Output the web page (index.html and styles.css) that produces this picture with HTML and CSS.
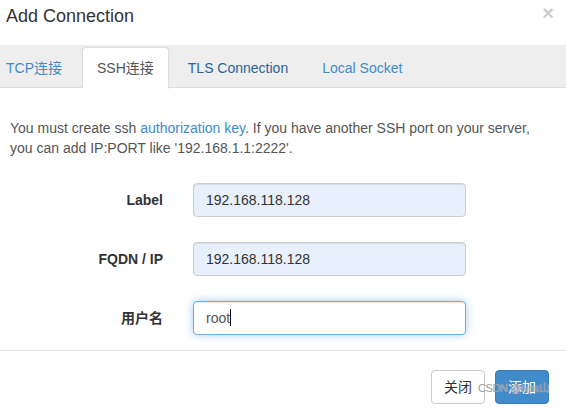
FILE: index.html
```html
<!DOCTYPE html>
<html>
<head>
<meta charset="utf-8">
<link rel="stylesheet" href="styles.css">
</head>
<body>
<div class="modal">
  <div class="modal-header">
    <h4 class="title">Add Connection</h4>
    <span class="close">×</span>
  </div>
  <ul class="tabs">
    <li class="tab first"><a>TCP连接</a></li>
    <li class="tab active"><a>SSH连接</a></li>
    <li class="tab"><a class="hover">TLS Connection</a></li>
    <li class="tab"><a>Local Socket</a></li>
  </ul>
  <div class="modal-body">
    <p class="help">You must create ssh <a class="link">authorization key</a>. If you have another SSH port on your server, you can add IP:PORT like '192.168.1.1:2222'.</p>
    <div class="form">
      <div class="label">Label</div>
      <div class="field autofill">192.168.118.128</div>
      <div class="label">FQDN / IP</div>
      <div class="field autofill">192.168.118.128</div>
      <div class="label">用户名</div>
      <div class="field focus">root<span class="caret"></span></div>
    </div>
  </div>
  <div class="modal-footer">
    <button class="btn btn-default">关闭</button>
    <button class="btn btn-primary">添加</button>
  </div>
  <div class="watermark">CSDN @lves山</div>
</div>
</body>
</html>
```
FILE: styles.css
```css
* { box-sizing: border-box; }
html, body { margin: 0; padding: 0; background: #fff; }
body {
  font-family: "Liberation Sans", Arial, "Noto Sans CJK SC", sans-serif;
  font-size: 14px;
  line-height: 20px;
  color: #333;
}
.modal { position: relative; width: 566px; height: 408px; overflow: hidden; }
.modal-header {
  display: flex;
  justify-content: space-between;
  align-items: flex-start;
  height: 45px;
  padding: 6px 12px 0 6px;
}
.title { margin: 0; font-size: 18px; font-weight: normal; line-height: 20px; color: #333; }
.close {
  font-size: 20px;
  font-weight: bold;
  line-height: 14px;
  color: #000;
  opacity: 0.2;
}
.tabs {
  list-style: none;
  margin: 0;
  padding: 2px 0 0 0;
  display: flex;
  background: #eee;
  border-bottom: 1px solid #ddd;
  height: 43px;
}
.tab { margin-right: 4px; margin-bottom: -1px; }
.tab a {
  display: block;
  padding: 10px 14px;
  line-height: 20px;
  color: #428bca;
  border: 1px solid transparent;
  border-radius: 4px 4px 0 0;
}
.tab.first a { padding-left: 5px; padding-right: 15px; }
.tab a.hover { color: #2a6496; }
.tab.active a {
  color: #555;
  background: #fff;
  border-color: #ddd #ddd transparent;
}
.modal-body { padding: 30px 15px 0 10px; }
.help { margin: 0 0 25px 0; color: #555; line-height: 20px; }
.link { color: #428bca; }
.form {
  display: grid;
  grid-template-columns: 163px 273px;
  column-gap: 30px;
  row-gap: 25px;
  align-items: center;
  margin-left: -10px;
}
.label { text-align: right; font-weight: bold; color: #333; }
.field {
  height: 34px;
  padding: 6px 12px;
  border: 1px solid #ccc;
  border-radius: 4px;
  color: #333;
  background: #fff;
  box-shadow: inset 0 1px 1px rgba(0,0,0,.075);
}
.field.autofill { background: #e8f0fe; }
.field.focus {
  color: #555;
  border-color: #66afe9;
  box-shadow: inset 0 1px 1px rgba(0,0,0,.075), 0 0 8px rgba(102,175,233,.6);
}
.caret {
  display: inline-block;
  width: 1px;
  height: 17px;
  background: #000;
  vertical-align: -3px;
}
.modal-footer {
  margin-top: 15px;
  border-top: 1px solid #e5e5e5;
  padding: 19px 17px 0 0;
  display: flex;
  justify-content: flex-end;
  gap: 10px;
}
.btn {
  font-family: "Liberation Sans", Arial, "Noto Sans CJK SC", sans-serif;
  font-size: 14px;
  line-height: 20px;
  padding: 6px 12px;
  border: 1px solid #ccc;
  border-radius: 4px;
  background: #fff;
  color: #333;
  height: 34px;
}
.btn-primary { background: #428bca; border-color: #357ebd; color: #fff; }
.watermark {
  position: absolute;
  z-index: 2;
  left: 478px;
  top: 380px;
  font-size: 11px;
  letter-spacing: -0.4px;
  line-height: 16px;
  color: #9a9a9a;
  text-shadow: 0 0 1px rgba(255,255,255,0.6);
  white-space: nowrap;
}
```
